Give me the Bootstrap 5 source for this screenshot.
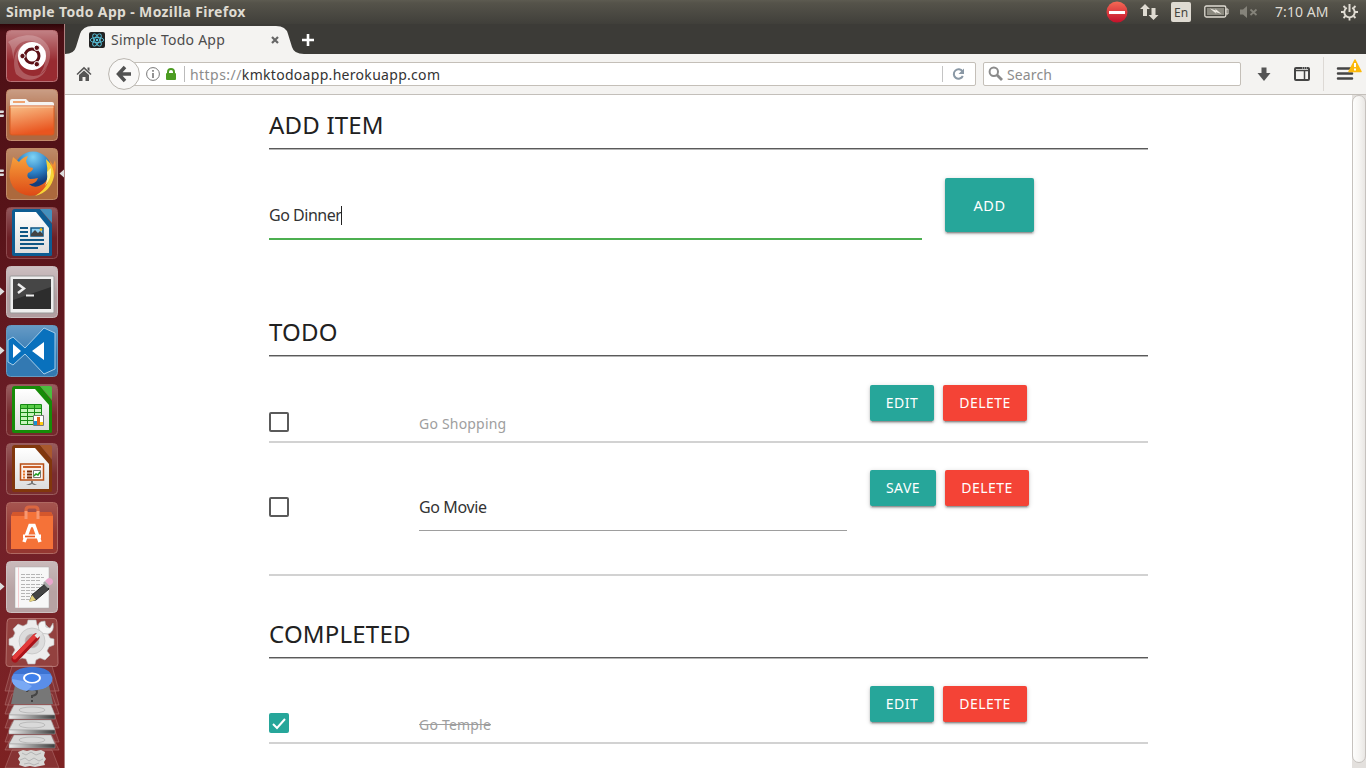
<!DOCTYPE html>
<html lang="en">
<head>
<meta charset="utf-8">
<title>Simple Todo App</title>
<link rel="stylesheet" href="https://cdn.jsdelivr.net/npm/bootstrap@5.3.0/dist/css/bootstrap.min.css">
<style>
body{height:768px;width:1366px;overflow:hidden;font-family:"Noto Sans","Open Sans",sans-serif;color:#212121;background:#fff}
svg{display:block;flex:none}
.panel{height:24px;background:linear-gradient(#5d5b51,#55534a 12%,#403f3a);color:#dfdbd2;font-size:14px;line-height:24px;padding:0 7px 0 6px}
.panel b{letter-spacing:.35px}
.kbd-lang{width:20px;height:20px;border-radius:2px;background:#dfdbd2;color:#45443d;font-size:12px;line-height:21px;text-align:center}
.launcher{width:65px;padding:6px 0 0;gap:7px;background:linear-gradient(#2e0508,#4d1016 8px,#571318 25%,#70202a 62%,#7d2222);border-right:1px solid #b08080}
.tabs{height:30px;background:#3c3b37;font-size:14px;color:#4c4c4c;border-bottom:0}
.toolbar{height:41px;background:#f4f3f1;border-bottom:1px solid #c3bfba;font-size:14px;color:#8c8c8c}
.field{height:24px;background:#fff;border:1px solid #c4bfb8;border-radius:2px}
.url{width:852px;margin-left:-16px;padding-left:24px}
.back{z-index:1}
.page-area{width:879px;margin-left:204px}
.sect-title{font-size:24px;line-height:28px;font-weight:400;margin:0 0 1px;height:54px;padding-top:16px;letter-spacing:.2px;border-bottom:1px solid #5a5a5a;box-shadow:0 1px #b5b5b5}
.sect-title.lower{height:55px;padding-top:17px}
.todo{border-bottom:2px solid #d2d2d2}
.c-check{width:150px}.c-text{width:451px}
.box{width:20px;height:20px;border:2px solid #5a5a5a;border-radius:2px}
.entry{font-size:16px;line-height:24px;color:#333;letter-spacing:-.48px}
.label{font-size:14px;line-height:20px;color:#9e9e9e;letter-spacing:.2px}
.mat{border:0;border-radius:2px;height:36px;padding:0;font-size:14px;line-height:36px;letter-spacing:.45px;color:#fff;text-align:center;box-shadow:0 2px 2px rgba(0,0,0,.2),0 1px 5px rgba(0,0,0,.16),0 3px 1px -2px rgba(0,0,0,.2)}
.teal{background:#26a69a}.red{background:#f44336}
.w64{width:64px}.w66{width:66px}.w84{width:84px}
.caret{width:1px;height:19px;background:#222}
.scroll{width:14px;background:#e3e0dd}
.thumb{height:668px;border:1px solid #c6c2be;border-radius:7px;background:linear-gradient(90deg,#fdfdfc,#f6f5f3 50%,#e9e7e4)}
</style>
</head>
<body class="d-flex flex-column">
<header class="panel d-flex align-items-center justify-content-between">
  <b>Simple Todo App - Mozilla Firefox</b>
  <div class="d-flex align-items-center">
    <svg width="22" height="22" viewBox="0 0 22 22"><defs><linearGradient id="stop" x2="0" y2="1"><stop stop-color="#f46a55"/><stop offset="1" stop-color="#c3102a"/></linearGradient></defs><circle cx="11" cy="11" r="10.500" fill="url(#stop)"/><path d="M3 10h16v3H3z" fill="#fff"/></svg>
    <svg width="19" height="18" viewBox="0 0 19 18" style="margin-left:12px"><path d="M5 1l5 5H7v7H3V6H0zM13.500 17l-5-5h3V5h4v7h3z" fill="#dfdbd2"/></svg>
    <div class="kbd-lang" style="margin-left:12px">En</div>
    <svg width="25" height="14" viewBox="0 0 25 14" style="margin-left:13px"><rect x=".8" y="1" width="21" height="11" rx="1.500" fill="none" stroke="#dfdbd2" stroke-width="1.300"/><path d="M3 3h17v7H3z" fill="#8b897f"/><path d="M22 4h2v5h-2z" fill="none" stroke="#dfdbd2"/><path d="M6 3.500l6 2-1-2 6.500 5.500-6-2 1 2z" fill="#eeeae2"/></svg>
    <svg width="20" height="14" viewBox="0 0 20 14" style="margin-left:10px"><path d="M1 4.500h3l4-3.500v12L4 9.500H1z" fill="#85837a"/><path d="M11.500 4.500l6 5.500M17.500 4.500l-6 5.500" stroke="#85837a" stroke-width="1.700"/></svg>
    <span style="margin-left:16px;width:56px;white-space:nowrap;letter-spacing:.08px">7:10 AM</span>
    <svg width="17" height="18" viewBox="0 0 17 18" style="margin-left:10px;margin-right:1px" fill="none" stroke="#dfdbd2"><path d="M5.800 4.700a5.200 5.200 0 1 0 5.400 0" stroke-width="1.900"/><path d="M8.500 1v8" stroke-width="2"/><path d="M0 9h3M14 9h3M8.500 14.500v3M2.500 3l2 2M14.500 3l-2 2M2.500 15l2-2M14.500 15l-2-2" stroke-width="1.800"/></svg>
  </div>
</header>
<div class="d-flex flex-grow-1 overflow-hidden">
<nav class="launcher d-flex flex-column align-items-center flex-shrink-0">
<svg width="64" height="52" viewBox="0 0 64 52"><defs>
<linearGradient id="shine" x2="0" y2="1"><stop stop-color="#fff" stop-opacity=".5"/><stop offset=".6" stop-color="#fff" stop-opacity="0"/></linearGradient>
<linearGradient id="fold" x2=".3" y2="1"><stop stop-color="#f9c088"/><stop offset="1" stop-color="#e9551f"/></linearGradient>
<linearGradient id="paper" x2="0" y2="1"><stop stop-color="#fff"/><stop offset="1" stop-color="#ddd"/></linearGradient>
<linearGradient id="disk" x2="1"><stop stop-color="#eee"/><stop offset="1" stop-color="#3d3d3d"/></linearGradient></defs>
<rect x="6.500" y=".5" width="51" height="51" rx="4" fill="#982b31" stroke="#b97276"/><rect x="7" y="1" width="50" height="50" rx="4" fill="url(#shine)" opacity=".8"/>
<g fill="#fff" opacity=".22"><path d="M8 12C30-2 48 8 50 22c1 12-6 20-10 22 8-10 8-30-8-33C20 9 12 18 14 30 12 25 13 17 8 12z"/><path d="M16 44c-5-14 0-28 12-31-12 6-14 22-4 30 8 5 18 4 23-6-3 12-20 18-31 7z"/></g>
<circle cx="32" cy="26" r="14" fill="#fff"/><circle cx="32" cy="26" r="7" fill="none" stroke="#5c1016" stroke-width="3"/><g fill="#5c1016" stroke="#fff" stroke-width="1"><circle cx="22.500" cy="26" r="2.700"/><circle cx="36.800" cy="17.800" r="2.700"/><circle cx="36.800" cy="34.200" r="2.700"/></g></svg>

<svg width="64" height="52" viewBox="0 0 64 52"><rect x="6.500" y=".5" width="51" height="51" rx="4" fill="#ad6842" stroke="#c58d6e"/><rect x="7" y="1" width="50" height="50" rx="4" fill="url(#shine)" opacity=".7"/><path d="M10 12q0-2 2-2h14l3 3h23q2 0 2 2v5H10z" fill="#f5f4f2"/><path d="M13 12h12v2H13z" fill="#efa471"/><path d="M10 17h44v27q0 2-2 2H12q-2 0-2-2z" fill="url(#fold)" stroke="#d65a20"/><path d="M10.500 18h43" stroke="#fbd3ae"/><path d="M0 21.500h3.500q1 .8 0 2.500H0zM0 25.500h3.500q1 .8 0 2.500H0z" fill="#ddd"/></svg>

<svg width="64" height="52" viewBox="0 0 64 52"><defs><radialGradient id="globe" cx=".5" cy=".15" r=".7"><stop stop-color="#7fd3f5"/><stop offset=".6" stop-color="#2a7fc4"/><stop offset="1" stop-color="#133e7c"/></radialGradient><linearGradient id="fox" x2="0" y2="1"><stop stop-color="#f7a23c"/><stop offset="1" stop-color="#dd4a16"/></linearGradient></defs><rect x="6.500" y=".5" width="51" height="51" rx="4" fill="#ac693d" stroke="#c18c69"/><rect x="7" y="1" width="50" height="50" rx="4" fill="url(#shine)" opacity=".45"/><circle cx="33" cy="22" r="18.500" fill="url(#globe)"/><path d="M13 9l6 5q4-5 9-6l-2 5 1 3 2 3 4 1q0 3-5 5-2 4 2 6 4 0 8-1-2 6-9 6 4 4 10 2 8-3 10-11 3-7 1-14l3 4 2-5q2 8-1 17-4 13-18 18-14 3-23-8-6-10-2-21z" fill="url(#fox)"/><path d="M46 11q8 7 8 17-3 16-19 20 10-6 13-14 1-4 0-8l-1 3q1-9-1-18z" fill="#f7d437"/><path d="M51 20q1 10-6 18 3-7 2-14z" fill="#fff2a0"/><path d="M0 21.500h3.500q1 .8 0 2.500H0zM0 25.500h3.500q1 .8 0 2.500H0zM64 21.500v8l-4.500-4z" fill="#ddd"/></svg>

<svg width="64" height="52" viewBox="0 0 64 52"><rect x="6.500" y=".5" width="51" height="51" rx="4" fill="#6d2026" stroke="#8c4a4e"/><rect x="7" y="1" width="50" height="50" rx="4" fill="url(#shine)" opacity=".5"/><path d="M15 2h25l12 15v31q0 1-2 1H14q-2 0-2-2V5q0-3 3-3z" fill="#0d5c92"/><path d="M40 2h10q2 0 2 2v12z" fill="#4390bd"/><path d="M15 5h21l13 16v25H15z" fill="url(#paper)"/><path d="M20 21h8M20 25h8M20 29h8M20 33h24M20 37h24M20 41h18" stroke="#0e5684" stroke-width="2"/><path d="M31 21h12v8H31z" fill="#8fd1f4" stroke="#0e5684" stroke-width="1.500"/><path d="M31 29v-2l4-4 3 3 2-2 3 3v2z" fill="#444"/><circle cx="41" cy="22.500" r="1.300" fill="#fb0"/></svg>

<svg width="64" height="52" viewBox="0 0 64 52"><rect x="6.500" y=".5" width="51" height="51" rx="4" fill="#b19da0" stroke="#c9bbbc"/><rect x="7" y="1" width="50" height="50" rx="4" fill="url(#shine)" opacity=".7"/><rect x="10" y="10" width="44" height="37" rx="1" fill="#eee" stroke="#999"/><path d="M13 13h38v30H13z" fill="#2d2d2d"/><path d="M13 13h38v8L13 34z" fill="#fff" opacity=".12"/><path d="M18 18l6 4.500-6 4.500" fill="none" stroke="#eee" stroke-width="2.400"/><path d="M26 29.500h8" stroke="#eee" stroke-width="2"/><path d="M0 21.500l4.500 4-4.500 4z" fill="#ddd"/></svg>

<svg width="64" height="52" viewBox="0 0 64 52"><rect x="6.500" y=".5" width="51" height="51" rx="4" fill="#3379b2" stroke="#6699bf"/><rect x="7" y="1" width="50" height="50" rx="4" fill="url(#shine)" opacity=".5"/><path d="M8 15l5-3 12 11L44 3l11 5v36l-11 5-19-20-12 11-5-3z" fill="#0971bd" stroke="#a6cde9"/><path d="M13 19l8 7-8 7zM44 17v18l-12-9z" fill="#fff"/><path d="M0 21.500l4.500 4-4.500 4z" fill="#ddd"/></svg>

<svg width="64" height="52" viewBox="0 0 64 52"><rect x="6.500" y=".5" width="51" height="51" rx="4" fill="#75292c" stroke="#965558"/><rect x="7" y="1" width="50" height="50" rx="4" fill="url(#shine)" opacity=".5"/><path d="M15 2h25l12 15v31q0 1-2 1H14q-2 0-2-2V5q0-3 3-3z" fill="#178b08"/><path d="M40 2h10q2 0 2 2v12z" fill="#4bbd3d"/><path d="M15 5h20l14 16v25H15z" fill="url(#paper)"/><path d="M20 21h22v20H20z" fill="#c7f5bb"/><path d="M20 21h22v3H20z" fill="#59cb47"/><path d="M20.500 20.500h21v20h-21zM20 24.500h22M20 28.500h22M20 32.500h22M20 36.500h22M27.500 21v20M34.500 21v20" fill="none" stroke="#178a14"/><path d="M33.500 31.500h10v10h-10z" fill="#fff" stroke="#777"/><path d="M34 37h3v4h-3z" fill="#1592d4"/><path d="M37 33h3v8h-3z" fill="#e46417"/><path d="M40 38h3v3h-3z" fill="#fc1"/></svg>

<svg width="64" height="52" viewBox="0 0 64 52"><rect x="6.500" y=".5" width="51" height="51" rx="4" fill="#7a2d2f" stroke="#9b5d5e"/><rect x="7" y="1" width="50" height="50" rx="4" fill="url(#shine)" opacity=".45"/><path d="M15 2h25l12 15v31q0 1-2 1H14q-2 0-2-2V5q0-3 3-3z" fill="#81370d"/><path d="M40 2h10q2 0 2 2v12z" fill="#a9592d"/><path d="M15 5h20l14 16v25H15z" fill="url(#paper)"/><path d="M20.500 21h23v16h-23z" fill="#fbeee7" stroke="#b84e15" stroke-width="1.500"/><path d="M23 24h18" stroke="#c9602a" stroke-width="2"/><path d="M23 28.500h2M23 31.500h2M23 34.500h2" stroke="#e77426" stroke-width="2"/><path d="M27 28.500h5M27 31.500h5M27 34.500h5" stroke="#762b07" stroke-width="2"/><path d="M33.500 27.500h7v7h-7z" fill="#fff" stroke="#777"/><path d="M34 33l2-2 2 1 2-3" fill="none" stroke="#1d9c20" stroke-width="1.500"/><path d="M31 38h2v2l4 2h-3l-2-1-2 1h-4l5-2z" fill="#777"/></svg>

<svg width="64" height="52" viewBox="0 0 64 52"><rect x="6.500" y=".5" width="51" height="51" rx="4" fill="#953731" stroke="#af6962"/><rect x="7" y="1" width="50" height="50" rx="4" fill="url(#shine)" opacity=".3"/><path d="M26 17V8q0-3 3-3h6q3 0 3 3v9" fill="none" stroke="#db6640" stroke-width="3"/><path d="M13 10h38l2 4v33H11V14z" fill="#f57238"/><path d="M11 14l2-4h12v4M39 14v-4h12l2 4z" fill="#d4572c"/><path d="M26 17V9M38 17V9" stroke="#f89770" stroke-width="3"/><g stroke="#fff" fill="none"><path d="M24 40l6-16.500h4L40 40" stroke-width="3.500"/><path d="M23 34.500h18" stroke-width="4"/></g><path d="M25 34.500h10" stroke="#ea5a20" stroke-width="1.700"/></svg>

<svg width="64" height="52" viewBox="0 0 64 52"><rect x="6.500" y=".5" width="51" height="51" rx="4" fill="#b7a2a3" stroke="#cdbfc0"/><rect x="7" y="1" width="50" height="50" rx="4" fill="url(#shine)" opacity=".5"/><path d="M15 6h34v41H15z" fill="#f7f7f7" stroke="#aaa" stroke-width=".5"/><path d="M18.500 6v41" stroke="#f4ccd0"/><path d="M21 13.500h21M21 16.500h23M21 19.500h20M21 23.500h23M21 26.500h19M21 29.500h15M21 32.500h17M21 35.500h12M21 38.500h13" stroke="#b5b5b5" stroke-dasharray="4 1"/><path d="M30 40l2-6 13-11 4 5-13 11z" fill="#444" stroke="#222"/><path d="M29 41l3-7 4 5z" fill="#e3d17c"/><path d="M45 20l2-2q2-2 5 0 2 3 0 5l-3 2z" fill="#eaa6cd"/><path d="M43 22l2-2 4.500 5-2 2z" fill="#aaa"/><path d="M0 21.500l4.500 4-4.500 4z" fill="#ddd"/></svg>

<svg width="64" height="151" viewBox="0 617 64 151" style="margin-top:-3px"><path d="M10 618.500h44q3 0 3 4l1 41q0 3-3 3H9q-3 0-3-3l1-41q0-4 3-4z" fill="#93413f" stroke="#b3706d"/>
<g fill="#ededed" stroke="#bbb" stroke-width=".6"><path d="M28 620h8l1 5 4 2 4-3 5 5-2 5 2 4 4 1v6l-5 2-2 4 3 4-5 5-5-2-4 2-1 4h-7l-2-5-4-1-4 2-6-5 3-5-2-4-4-1v-6l4-2 2-4-2-4 5-5 5 2 4-2z"/><circle cx="32" cy="641" r="13" fill="#ddd"/><circle cx="32" cy="641" r="7" fill="#b9a5a5"/></g>
<path d="M15 659L36 637" stroke="#a91219" stroke-width="7" stroke-linecap="round"/><path d="M14.500 657.500L35 636" stroke="#e23b3a" stroke-width="4" stroke-linecap="round"/><path d="M36 637l8-8" stroke="#e4e4e4" stroke-width="4"/><path d="M39 630q-3-9 6-9l1 6 4 1 3-5q2 9-5 11-5 1-9-4z" fill="#f4f4f4" stroke="#aaa" stroke-width=".6"/>
<g fill="#af7776" fill-opacity=".2" stroke="#bf8582" stroke-opacity=".45"><path d="M12 666h40l7 25H5zM12 680h40l7 25H5zM12 694h40l7 20H5zM12 708h40l7 20H5zM12 722h40l7 20H5zM12 736h40l7 14H5zM12 750h40l7 18H5z"/></g>
<path d="M15 685h34l4 19H11z" fill="#777"/><path d="M27 692q0-3 5-3t5 3-5 4v2M32 700v2" fill="none" stroke="#444" stroke-width="2"/>
<ellipse cx="32" cy="679" rx="20.500" ry="11.500" fill="#5a8ee9"/><path d="M13 674q5-7 19-7 15 0 19 7H32z" fill="#3c73d2"/><path d="M23 681l9 5-5 5q-15-3-15-12z" fill="#79a9f4"/><ellipse cx="32" cy="678" rx="9" ry="5.500" fill="#fff"/><ellipse cx="32" cy="678" rx="7" ry="4" fill="#3e80eb"/>
<g stroke="#999" stroke-width=".5"><path d="M14 705h37l4 10H9z" fill="#d9d9d9"/><path d="M9 715h46v4H9z" fill="url(#disk)"/><path d="M14 720h37l4 10H9z" fill="#d9d9d9"/><path d="M9 730h46v4H9z" fill="url(#disk)"/><path d="M14 735h37l4 9H9z" fill="#d9d9d9"/><path d="M9 744h46v4H9z" fill="url(#disk)"/></g>
<g fill="none" stroke="#bbb"><ellipse cx="32" cy="710" rx="13" ry="3"/><ellipse cx="32" cy="725" rx="13" ry="3"/><ellipse cx="32" cy="740" rx="13" ry="3"/></g>
<path d="M18 752l5-2 4 1 4-1 5 1 5-1 4 2-1 4 2 3-2 3 1 3-5 1-5 1-5-1-5 1-6-2 1-3-2-3 2-3z" fill="#d8d8d6"/><path d="M22 753l4 2 5-3 5 3 5-2M20 760l5-2 4 3 5-3 5 3 4-2M24 764l5-1 5 2 5-2" fill="none" stroke="#b5b5b5"/></svg>
</nav>

<div class="d-flex flex-column flex-grow-1">
<div class="tabs">
<div class="position-relative">
<svg width="270" height="30" viewBox="65 24 270 30"><path d="M65 54q9 0 11-7l4-13q3-8 12-8h184q10 0 12 8l4 13q2 7 12 7z" fill="#f4f3f1"/><rect x="89" y="32" width="16" height="16" rx="2" fill="#222"/><g fill="none" stroke="#5ac6e0" stroke-width=".9"><ellipse cx="97" cy="40" rx="6.800" ry="2.600"/><ellipse cx="97" cy="40" rx="6.800" ry="2.600" transform="rotate(60 97 40)"/><ellipse cx="97" cy="40" rx="6.800" ry="2.600" transform="rotate(120 97 40)"/></g><circle cx="97" cy="40" r="1.200" fill="#5ac6e0"/><path d="M272 37l6 6M278 37l-6 6" stroke="#666" stroke-width="2.200"/><path d="M308 34v12M302 40h12" stroke="#fff" stroke-width="2.600"/></svg>
<span class="position-absolute" style="left:46px;top:6px;line-height:20px;letter-spacing:.25px">Simple Todo App</span>
</div></div>
<div class="toolbar d-flex align-items-center flex-shrink-0">
<svg width="16" height="16" viewBox="0 0 16 16" style="margin-left:11px"><path d="M8 .8L15.500 8l-1 1L8 3 1.500 9l-1-1zM11.500 1.500h2v4l-2-2zM8 4.500L13 9v6H9.500v-4h-3v4H3V9z" fill="#555"/></svg>
<svg class="back" width="32" height="32" viewBox="0 0 32 32" style="margin-left:16px"><circle cx="16" cy="16" r="15.400" fill="#f9f8f7" stroke="#b8b4ae"/><path d="M17 9l-6.500 7 6.500 7M11 16h12" fill="none" stroke="#525252" stroke-width="3.500"/></svg>
<div class="field url d-flex align-items-center">
<svg width="54" height="22" viewBox="145 63 54 22" style="margin-left:-8px"><circle cx="157" cy="74" r="6.400" fill="none" stroke="#777"/><path d="M157 73v5M157 70v1.800" stroke="#777" stroke-width="1.600"/><rect x="170" y="73" width="10" height="7" rx="1" fill="#4c9c22"/><path d="M172 74v-2a3 3 0 0 1 6 0v2" fill="none" stroke="#4c9c22" stroke-width="2"/><path d="M188.500 66v16" stroke="#bbb"/></svg>
<span style="margin-left:-5px;letter-spacing:.3px"><span style="letter-spacing:.45px">https://</span><span style="color:#333">kmktodoapp.herokuapp.com</span></span>
<svg class="ms-auto" width="34" height="22" viewBox="941 63 34 22"><path d="M942.500 66v16" stroke="#c4c4c4"/><path d="M962.500 71.500a4.700 4.700 0 1 0 .3 4.500" fill="none" stroke="#8a98a5" stroke-width="2"/><path d="M964 68.500v5.500h-5.500z" fill="#8a98a5"/></svg>
</div>
<div class="field d-flex align-items-center" style="margin-left:7px;width:258px;padding-left:4px"><svg width="16" height="16" viewBox="0 0 16 16"><circle cx="5.800" cy="5.800" r="4.200" fill="none" stroke="#8b8b8b" stroke-width="2"/><path d="M9 9l5 5" stroke="#8b8b8b" stroke-width="2.800"/></svg><span style="margin-left:3px;letter-spacing:.12px">Search</span></div>
<svg width="125" height="40" viewBox="1241 54 125 40"><path d="M1261.500 67.500h5V73h4l-6.500 8-6.500-8h4z" fill="#555"/><rect x="1295" y="68" width="14" height="12" rx="1" fill="none" stroke="#444" stroke-width="2"/><path d="M1295 70.500h14" stroke="#444" stroke-width="1.500"/><path d="M1304.500 71v9" stroke="#444" stroke-width="1.500"/><path d="M1302 68h1M1304 68h1M1306 68h1" stroke="#ddd"/><path d="M1323.500 57v34" stroke="#ddd9d5"/><path d="M1338 68.500h14M1338 73.500h14M1338 78.500h14" stroke="#444" stroke-width="2.500" stroke-linecap="round"/><path d="M1355 60l6 11.500h-12z" fill="#fcb90a" stroke="#fcb90a" stroke-width="1.500" stroke-linejoin="round"/><path d="M1355 63v4M1355 68.500v2" stroke="#fff" stroke-width="2"/></svg>
</div>
<div class="d-flex flex-grow-1 overflow-hidden">
<main class="flex-grow-1"><div class="page-area">
<section style="height:206px">
<h2 class="sect-title">ADD ITEM</h2>
<div class="d-flex align-items-start" style="padding-top:28px">
<div style="width:653px;height:62px;padding-top:25px;border-bottom:2px solid #4caf50" class="d-flex align-items-start"><span class="entry">Go Dinner</span><span class="caret" style="margin-top:3px"></span></div>
<button class="mat teal" style="width:89px;height:54px;line-height:53px;margin-left:23px;font-size:14.500px;letter-spacing:.6px">ADD</button>
</div></section>
<section style="height:303px">
<h2 class="sect-title lower">TODO</h2>
<div class="todo d-flex" style="height:86px;padding-top:28px"><div class="c-check"><div class="box" style="margin-top:27px"></div></div><div class="c-text"><div class="label" style="margin-top:29px">Go Shopping</div></div><div class="d-flex" style="gap:9px"><button class="mat teal w64">EDIT</button><button class="mat red w84">DELETE</button></div></div>
<div class="todo d-flex" style="height:133px;padding-top:27px"><div class="c-check"><div class="box" style="margin-top:27px"></div></div><div class="c-text"><div class="entry" style="width:428px;height:61px;padding-top:25px;letter-spacing:-.38px;border-bottom:1px solid #9e9e9e">Go Movie</div></div><div class="d-flex" style="gap:9px"><button class="mat teal w66">SAVE</button><button class="mat red w84">DELETE</button></div></div>
</section>
<section>
<h2 class="sect-title">COMPLETED</h2>
<div class="todo d-flex" style="height:85px;padding-top:27px"><div class="c-check"><svg width="20" height="20" viewBox="0 0 20 20" style="margin-top:27px"><rect width="20" height="20" rx="2" fill="#26a69a"/><path d="M4 11l4 4 8-9" fill="none" stroke="#fff" stroke-width="2"/></svg></div><div class="c-text"><div class="label text-decoration-line-through" style="margin-top:29px">Go Temple</div></div><div class="d-flex" style="gap:9px"><button class="mat teal w64">EDIT</button><button class="mat red w84">DELETE</button></div></div>
</section>
</div></main>
<div class="scroll"><div class="thumb"></div></div>
</div>
</div>
</div>
<script src="https://cdn.jsdelivr.net/npm/bootstrap@5.3.0/dist/js/bootstrap.bundle.min.js"></script>
</body>
</html>
